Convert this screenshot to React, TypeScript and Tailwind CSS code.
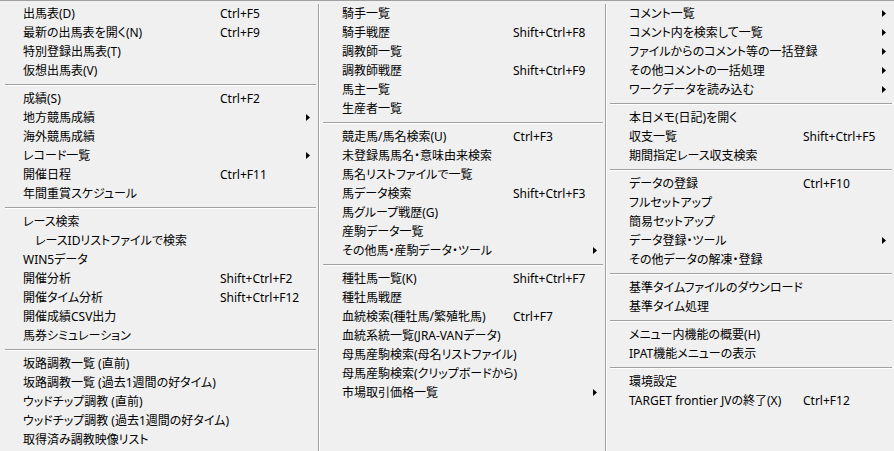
import React from "react";

type Item = { t: string; k?: string; sub?: boolean; indent?: boolean } | "-";

const col1: Item[] = [
  { t: "出馬表(D)", k: "Ctrl+F5" },
  { t: "最新の出馬表を開く(N)", k: "Ctrl+F9" },
  { t: "特別登録出馬表(T)" },
  { t: "仮想出馬表(V)" },
  "-",
  { t: "成績(S)", k: "Ctrl+F2" },
  { t: "地方競馬成績", sub: true },
  { t: "海外競馬成績" },
  { t: "レコード一覧", sub: true },
  { t: "開催日程", k: "Ctrl+F11" },
  { t: "年間重賞スケジュール" },
  "-",
  { t: "レース検索" },
  { t: "レースIDリストファイルで検索", indent: true },
  { t: "WIN5データ" },
  { t: "開催分析", k: "Shift+Ctrl+F2" },
  { t: "開催タイム分析", k: "Shift+Ctrl+F12" },
  { t: "開催成績CSV出力" },
  { t: "馬券シミュレーション" },
  "-",
  { t: "坂路調教一覧 (直前)" },
  { t: "坂路調教一覧 (過去1週間の好タイム)" },
  { t: "ウッドチップ調教 (直前)" },
  { t: "ウッドチップ調教 (過去1週間の好タイム)" },
  { t: "取得済み調教映像リスト" },
];

const col2: Item[] = [
  { t: "騎手一覧" },
  { t: "騎手戦歴", k: "Shift+Ctrl+F8" },
  { t: "調教師一覧" },
  { t: "調教師戦歴", k: "Shift+Ctrl+F9" },
  { t: "馬主一覧" },
  { t: "生産者一覧" },
  "-",
  { t: "競走馬/馬名検索(U)", k: "Ctrl+F3" },
  { t: "未登録馬馬名・意味由来検索" },
  { t: "馬名リストファイルで一覧" },
  { t: "馬データ検索", k: "Shift+Ctrl+F3" },
  { t: "馬グループ戦歴(G)" },
  { t: "産駒データ一覧" },
  { t: "その他馬・産駒データ・ツール", sub: true },
  "-",
  { t: "種牡馬一覧(K)", k: "Shift+Ctrl+F7" },
  { t: "種牡馬戦歴" },
  { t: "血統検索(種牡馬/繁殖牝馬)", k: "Ctrl+F7" },
  { t: "血統系統一覧(JRA-VANデータ)" },
  { t: "母馬産駒検索(母名リストファイル)" },
  { t: "母馬産駒検索(クリップボードから)" },
  { t: "市場取引価格一覧", sub: true },
];

const col3: Item[] = [
  { t: "コメント一覧", sub: true },
  { t: "コメント内を検索して一覧", sub: true },
  { t: "ファイルからのコメント等の一括登録", sub: true },
  { t: "その他コメントの一括処理", sub: true },
  { t: "ワークデータを読み込む", sub: true },
  "-",
  { t: "本日メモ(日記)を開く" },
  { t: "収支一覧", k: "Shift+Ctrl+F5" },
  { t: "期間指定レース収支検索" },
  "-",
  { t: "データの登録", k: "Ctrl+F10" },
  { t: "フルセットアップ" },
  { t: "簡易セットアップ" },
  { t: "データ登録・ツール", sub: true },
  { t: "その他データの解凍・登録" },
  "-",
  { t: "基準タイムファイルのダウンロード" },
  { t: "基準タイム処理" },
  "-",
  { t: "メニュー内機能の概要(H)" },
  { t: "IPAT機能メニューの表示" },
  "-",
  { t: "環境設定" },
  { t: "TARGET frontier JVの終了(X)", k: "Ctrl+F12" },
];

const Arrow = () => (
  <svg width="4" height="7" viewBox="0 0 4 7" className="shrink-0">
    <polygon points="0,0 4,3.5 0,7" fill="#000" />
  </svg>
);

const Column = ({
  items,
  width,
  pad,
  label,
  sepLeft,
}: {
  items: Item[];
  width: string;
  pad: string;
  label: string;
  sepLeft: string;
}) => (
  <div className={`${width} shrink-0 flex flex-col pt-[3px]`}>
    {items.map((it, i) =>
      it === "-" ? (
        <div key={i} className={`h-[9px] pt-[4px] ${sepLeft} mr-[2px]`}>
          <div className="border-t border-[#a0a0a0] border-b border-b-white" />
        </div>
      ) : (
        <div key={i} className={`h-[19px] flex items-center ${pad} pr-[8px]`}>
          <div className={`${label} shrink-0 whitespace-nowrap ${it.indent ? "pl-[12px]" : ""}`}>
            {it.t}
          </div>
          <div className="whitespace-nowrap">{it.k}</div>
          <div className="ml-auto">{it.sub && <Arrow />}</div>
        </div>
      )
    )}
  </div>
);

const Divider = () => (
  <div className="w-[2px] shrink-0 mt-[3px] border-l border-[#a0a0a0] border-r border-r-white" />
);

export default function App() {
  return (
    <div
      className="w-[894px] h-[451px] overflow-hidden bg-[#f0f0f0] border-t border-[#a0a0a0] flex text-[12px] leading-[19px] text-black [font-feature-settings:'palt']"
      style={{ fontFamily: '"Noto Sans", "Noto Sans CJK JP", sans-serif' }}
    >
      <Column items={col1} width="w-[318px]" pad="pl-[23px]" label="w-[197px]" sepLeft="ml-[5px]" />
      <Divider />
      <Column items={col2} width="w-[285px]" pad="pl-[22px]" label="w-[171px]" sepLeft="ml-[3px]" />
      <Divider />
      <Column items={col3} width="w-[287px]" pad="pl-[22px]" label="w-[174px]" sepLeft="ml-[3px]" />
    </div>
  );
}
